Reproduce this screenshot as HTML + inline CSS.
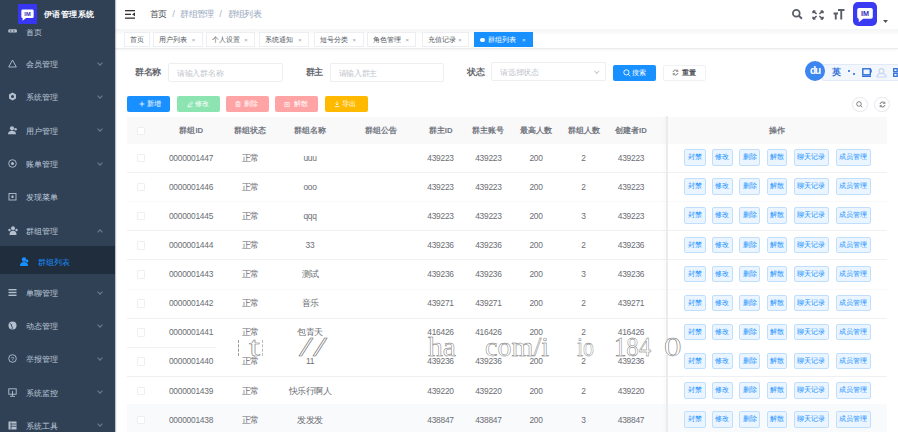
<!DOCTYPE html><html><head><meta charset="utf-8"><style>
*{margin:0;padding:0;box-sizing:border-box}
html,body{width:898px;height:432px;overflow:hidden;background:#fff;font-family:"Liberation Sans",sans-serif;}
.abs{position:absolute}
svg{position:absolute;overflow:visible}
.side{position:absolute;left:0;top:0;width:115px;height:432px;background:#304156;box-shadow:1px 0 1px rgba(0,21,41,.25);z-index:5;overflow:hidden}
.mi{position:absolute;left:0;width:115px;height:10px;color:#bfcbd9;font-size:8.2px;line-height:10px;white-space:nowrap}
.mi .t{position:absolute;left:26px;top:0.4px}
.mi svg{left:7.8px;top:-0.6px}
.mi .ch{position:absolute;left:98px;top:1.5px;width:4px;height:4px;border-right:0.7px solid #6f7d90;border-bottom:0.7px solid #6f7d90;transform:rotate(45deg)}
.logo{position:absolute;left:0;top:0;width:115px;height:28.75px;background:#304156;z-index:3}
.nav{position:absolute;left:115px;top:0;width:783px;height:29px;background:#fff}
.bc{position:absolute;top:9.4px;font-size:8.6px;letter-spacing:-0.6px;line-height:10px;color:#97a8be;white-space:nowrap}
.tags{position:absolute;left:115px;top:28.75px;width:783px;height:20px;background:#fff;border-bottom:1px solid #eaecf0;box-shadow:0 1px 2px rgba(0,0,0,.05)}
.tag{position:absolute;top:3px;height:15.5px;border:1px solid #eceef2;background:#fff;color:#51565e;font-size:7px;line-height:14.5px;white-space:nowrap;padding-left:5px}
.tag .x{position:absolute;top:0;font-size:6px;color:#a0a0a0}
.lbl{position:absolute;margin-top:-0.7px;font-size:8.6px;letter-spacing:-0.4px;font-weight:bold;color:#62656b;line-height:10px;white-space:nowrap}
.inp{position:absolute;height:19px;border:1px solid #eceef2;border-radius:2px;background:#fff;font-size:7.6px;letter-spacing:-0.3px;color:#c0c4cc;line-height:19px;padding-left:8px;white-space:nowrap}
.btn{position:absolute;height:16px;border-radius:2px;font-size:7px;line-height:16px;color:#fff;text-align:center;white-space:nowrap}
.th{position:absolute;font-size:7.8px;font-weight:bold;color:#72767f;line-height:10px;white-space:nowrap;transform:translateX(-50%)}
.td{position:absolute;font-size:8.4px;letter-spacing:-0.25px;color:#6c6e74;line-height:10px;white-space:nowrap;transform:translateX(-50%)}
.cb{position:absolute;left:137px;width:8px;height:8.5px;border:1px solid #edeff2;background:#fff;border-radius:1px}
.rb{position:absolute;left:127px;width:760px;height:1px;background:#eef0f4}
.ob{position:absolute;height:16.5px;border:1px solid #c0dffd;background:#eaf5ff;border-radius:2px;color:#1890ff;font-size:6.5px;line-height:14.5px;text-align:center;white-space:nowrap}
</style></head><body>
<div class="side">
<div class="mi" style="top:27.299999999999997px"><svg width="9" height="9" viewBox="0 0 9 9"><rect x="0.3" y="2.2" width="8.6" height="3.4" rx="1.2" fill="#b3bfce"/><rect x="2.2" y="3.3" width="1" height="1.3" fill="#304156"/><rect x="5.3" y="3.3" width="1" height="1.3" fill="#304156"/></svg><span class="t">首页</span></div>
<div class="mi" style="top:60px"><svg width="9" height="9" viewBox="0 0 9 9"><path d="M4.5 1 L8.3 8 H0.7 Z" fill="none" stroke="#b3bfce" stroke-width="0.9"/></svg><span class="t">会员管理</span><span class="ch" style="top:1px"></span></div>
<div class="mi" style="top:93px"><svg width="9" height="9" viewBox="0 0 9 9"><path d="M4.5 0.5 L8 2.5 V6.5 L4.5 8.5 L1 6.5 V2.5 Z" fill="#b3bfce"/><circle cx="4.5" cy="4.5" r="1.5" fill="#304156"/></svg><span class="t">系统管理</span><span class="ch" style="top:1px"></span></div>
<div class="mi" style="top:126.30000000000001px"><svg width="10" height="9" viewBox="0 0 10 9"><circle cx="4" cy="2.3" r="2.1" fill="#b3bfce"/><path d="M0 8.3 Q0 4.8 4 4.8 Q8 4.8 8 8.3 Z" fill="#b3bfce"/><circle cx="7.6" cy="3.2" r="1.2" fill="#b3bfce"/></svg><span class="t">用户管理</span><span class="ch" style="top:1px"></span></div>
<div class="mi" style="top:159.6px"><svg width="9" height="9" viewBox="0 0 9 9"><circle cx="4.5" cy="4.5" r="3.8" fill="none" stroke="#b3bfce" stroke-width="0.9"/><circle cx="4.5" cy="4.5" r="1.5" fill="#b3bfce"/></svg><span class="t">账单管理</span><span class="ch" style="top:1px"></span></div>
<div class="mi" style="top:193px"><svg width="9" height="9" viewBox="0 0 9 9"><rect x="1" y="1.5" width="7" height="6.5" fill="none" stroke="#b3bfce" stroke-width="0.9"/><rect x="3.5" y="3.5" width="2" height="2.5" fill="#b3bfce"/></svg><span class="t">发现菜单</span></div>
<div class="mi" style="top:226.3px"><svg width="10" height="9" viewBox="0 0 10 9"><circle cx="5" cy="2.3" r="2" fill="#b3bfce"/><path d="M1.5 9 Q1.5 4.8 5 4.8 Q8.5 4.8 8.5 9 Z" fill="#b3bfce"/><circle cx="1.5" cy="4" r="1.2" fill="#b3bfce"/><circle cx="8.5" cy="4" r="1.2" fill="#b3bfce"/></svg><span class="t">群组管理</span><span class="ch" style="top:3.5px;transform:rotate(-135deg)"></span></div>
<div class="abs" style="left:0;top:245.5px;width:115px;height:28.5px;background:#1f2d3d"></div>
<div class="mi" style="top:257.5px;color:#1890ff"><svg style="left:20px" width="9" height="9" viewBox="0 0 9 9"><circle cx="4" cy="2.5" r="2.2" fill="#1890ff"/><path d="M0 9 Q0 5 4 5 Q8 5 8 9 Z" fill="#1890ff"/><circle cx="7" cy="4" r="1.4" fill="#1890ff"/></svg><span class="t" style="left:38px">群组列表</span></div>
<div class="mi" style="top:288.8px"><svg width="9" height="9" viewBox="0 0 9 9"><rect x="0.5" y="1" width="8" height="1.4" fill="#b3bfce"/><rect x="0.5" y="3.8" width="8" height="1.4" fill="#b3bfce"/><rect x="0.5" y="6.6" width="8" height="1.4" fill="#b3bfce"/></svg><span class="t">单聊管理</span><span class="ch" style="top:1px"></span></div>
<div class="mi" style="top:321.9px"><svg width="9" height="9" viewBox="0 0 9 9"><circle cx="4.5" cy="4.5" r="4" fill="#b3bfce"/><path d="M2 2.5 Q4 3 3.5 5 Q5 6 4 8" fill="none" stroke="#304156" stroke-width="0.9"/></svg><span class="t">动态管理</span><span class="ch" style="top:1px"></span></div>
<div class="mi" style="top:355px"><svg width="9" height="9" viewBox="0 0 9 9"><circle cx="4.5" cy="4.5" r="3.8" fill="none" stroke="#b3bfce" stroke-width="0.9"/><text x="4.5" y="6.6" font-size="6" text-anchor="middle" fill="#b3bfce" font-family="Liberation Sans">?</text></svg><span class="t">举报管理</span><span class="ch" style="top:1px"></span></div>
<div class="mi" style="top:388.2px"><svg width="9" height="9" viewBox="0 0 9 9"><rect x="0.8" y="0.8" width="7.4" height="5.4" fill="none" stroke="#b3bfce" stroke-width="0.9"/><path d="M4.5 3 V8 M2 8.3 H7" stroke="#b3bfce" stroke-width="0.9"/></svg><span class="t">系统监控</span><span class="ch" style="top:1px"></span></div>
<div class="mi" style="top:421.3px"><svg width="9" height="9" viewBox="0 0 9 9"><rect x="0.5" y="0.5" width="8" height="8" fill="#b3bfce"/><path d="M3 1.5 V8.5 M3 3 H8.5 M3 5.3 H8.5" stroke="#304156" stroke-width="0.8"/></svg><span class="t">系统工具</span><span class="ch" style="top:1px"></span></div>
<div class="logo"><div class="abs" style="left:17.5px;top:3.5px;width:19px;height:20.5px;background:#3737f3;border-radius:1px"></div><svg style="left:17.5px;top:3.5px" width="19" height="20.5" viewBox="0 0 20 20"><path d="M5 5 H15 Q16.5 5 16.5 6.5 V12.5 Q16.5 14 15 14 H8.5 L4.8 16.8 V14 Q3.5 14 3.5 12.5 V6.5 Q3.5 5 5 5 Z" fill="#fff"/><text x="10" y="11.9" font-size="6" font-weight="bold" text-anchor="middle" fill="#3030b8" font-family="Liberation Sans">IM</text></svg><div class="abs" style="left:44px;top:9.7px;font-size:8.2px;letter-spacing:0.45px;font-weight:bold;color:#fff;line-height:10px;white-space:nowrap">伊语管理系统</div></div>
</div>
<div class="nav">
<svg style="left:9.8px;top:10px" width="10" height="9" viewBox="0 0 10 9"><rect x="0" y="0" width="10" height="1.3" fill="#333"/><rect x="0" y="3.7" width="6" height="1.3" fill="#333"/><path d="M10 2.5 L7 4.35 L10 6.2 Z" fill="#333"/><rect x="0" y="7.5" width="10" height="1.3" fill="#333"/></svg>
<div class="bc" style="left:34.7px;color:#4a4d52">首页</div><div class="bc" style="left:57.3px;font-size:9.5px;color:#a8b4c4">/</div><div class="bc" style="left:65.3px">群组管理</div><div class="bc" style="left:104.3px;font-size:9.5px;color:#a8b4c4">/</div><div class="bc" style="left:112.7px">群组列表</div>
<svg style="left:676.9px;top:9.4px" width="11" height="10" viewBox="0 0 11 10"><circle cx="4.3" cy="4.3" r="3.4" fill="none" stroke="#5a5e66" stroke-width="1.8"/><path d="M6.8 6.8 L10 9.8" stroke="#5a5e66" stroke-width="1.9"/></svg>
<svg style="left:697px;top:9.5px" width="12" height="10" viewBox="0 0 12 10"><path d="M1.2 1.2 L4.6 3.9 M1 1 H3.4 M1 1 V3.2 M10.8 1.2 L7.4 3.9 M11 1 H8.6 M11 1 V3.2 M1.2 8.8 L4.6 6.1 M1 9 H3.4 M1 9 V6.8 M10.8 8.8 L7.4 6.1 M11 9 H8.6 M11 9 V6.8" fill="none" stroke="#5a5e66" stroke-width="1.5"/></svg>
<svg style="left:717.8px;top:9px" width="12" height="11" viewBox="0 0 12 11"><path d="M0.5 4.5 H5 M2.75 4.5 V10.5 M5 1 H11.5 M8.25 1 V10.5" fill="none" stroke="#5a5e66" stroke-width="1.9"/></svg>
<div class="abs" style="left:738px;top:2px;width:24px;height:24px;border-radius:5px;background:#3a3af2"></div>
<svg style="left:738px;top:1.5px" width="24" height="24" viewBox="0 0 20 20"><path d="M5 5 H15 Q16.5 5 16.5 6.5 V12.5 Q16.5 14 15 14 H8.5 L4.8 16.8 V14 Q3.5 14 3.5 12.5 V6.5 Q3.5 5 5 5 Z" fill="#fff"/><text x="10" y="11.9" font-size="6" font-weight="bold" text-anchor="middle" fill="#3030b8" font-family="Liberation Sans">IM</text></svg>
<svg style="left:768px;top:19.5px" width="5" height="3" viewBox="0 0 5 3"><path d="M0 0 H5 L2.5 3 Z" fill="#555"/></svg>
</div>
<div class="tags">
<div class="abs" style="left:0;top:0;width:783px;height:5px;background:linear-gradient(#f4f5f6,#fcfcfc)"></div>
<div class="tag" style="left:9.200000000000003px;width:25.499999999999986px">首页</div>
<div class="tag" style="left:38px;width:49.69999999999999px">用户列表<span class="x" style="left:37.69999999999999px">×</span></div>
<div class="tag" style="left:91px;width:49.30000000000001px">个人设置<span class="x" style="left:37.30000000000001px">×</span></div>
<div class="tag" style="left:144.2px;width:50.10000000000002px">系统通知<span class="x" style="left:38.10000000000002px">×</span></div>
<div class="tag" style="left:198.5px;width:50.10000000000002px">短号分类<span class="x" style="left:38.10000000000002px">×</span></div>
<div class="tag" style="left:251.60000000000002px;width:49.799999999999955px">角色管理<span class="x" style="left:37.799999999999955px">×</span></div>
<div class="tag" style="left:306.7px;width:47.60000000000002px">充值记录<span class="x" style="left:35.60000000000002px">×</span></div>
<div class="tag" style="left:359px;width:59px;background:#1890ff;border-color:#1890ff;color:#fff;padding-left:13px"><span class="abs" style="left:5px;top:5px;width:4.5px;height:4.5px;border-radius:50%;background:#fff"></span>群组列表<span class="x" style="left:47px;color:#e8f2ff">×</span></div>
</div>
<div class="lbl" style="left:135px;top:67.5px">群名称</div>
<div class="inp" style="left:168px;top:62.5px;width:114.5px">请输入群名称</div>
<div class="lbl" style="left:305.7px;top:67.5px">群主</div>
<div class="inp" style="left:329.7px;top:62.5px;width:114.7px">请输入群主</div>
<div class="lbl" style="left:467px;top:67.5px">状态</div>
<div class="inp" style="left:491.2px;top:62px;width:115px">请选择状态</div>
<div class="abs" style="left:594.5px;top:68.5px;width:3.5px;height:3.5px;border-right:0.8px solid #c0c4cc;border-bottom:0.8px solid #c0c4cc;transform:rotate(45deg)"></div>
<div class="btn" style="left:612.7px;top:64.6px;width:43.3px;background:#1890ff;padding-left:9px">搜索</div><svg style="left:622.5px;top:68.6px" width="8" height="8" viewBox="0 0 8 8"><circle cx="3.4" cy="3.4" r="2.6" fill="none" stroke="#fff" stroke-width="0.9"/><path d="M5.3 5.3 L7.3 7.3" stroke="#fff" stroke-width="0.9"/></svg>
<div class="btn" style="left:662.9px;top:64.6px;width:42.7px;background:#fff;border:1px solid #f0f1f4;color:#50535a;line-height:14px;padding-left:9px;font-weight:bold">重置</div><svg style="left:672px;top:68.8px" width="7" height="7" viewBox="0 0 7 7"><path d="M1 3 A2.6 2.6 0 0 1 5.8 2.3 M6 4 A2.6 2.6 0 0 1 1.2 4.7" fill="none" stroke="#666" stroke-width="0.8"/><path d="M5.8 0.6 V2.6 H3.9 M1.2 6.4 V4.4 H3.1" fill="none" stroke="#666" stroke-width="0.6"/></svg>
<div class="btn" style="left:127.2px;top:96.2px;width:43px;height:16.3px;background:#1890ff"></div>
<svg style="left:139px;top:101.4px" width="6" height="6" viewBox="0 0 6 6"><path d="M3 0.5 V5.5 M0.5 3 H5.5" stroke="#fff" stroke-width="0.8" fill="none"/></svg>
<div class="abs" style="left:147.3px;top:99.4px;font-size:7px;line-height:10px;color:#fff;white-space:nowrap;letter-spacing:-0.2px">新增</div>
<div class="btn" style="left:176.7px;top:96.2px;width:43px;height:16.3px;background:#8ce4b1"></div>
<svg style="left:186.5px;top:101.4px" width="6" height="6" viewBox="0 0 6 6"><path d="M1 5.5 L1.3 4 L4.5 0.8 L5.6 1.9 L2.4 5.1 Z M0.5 5.8 H5.5" stroke="#fff" stroke-width="0.7" fill="none"/></svg>
<div class="abs" style="left:195px;top:99.4px;font-size:7px;line-height:10px;color:#fff;white-space:nowrap;letter-spacing:-0.2px">修改</div>
<div class="btn" style="left:225.7px;top:96.2px;width:43px;height:16.3px;background:#ffa4a4"></div>
<svg style="left:234.5px;top:101.4px" width="6" height="6" viewBox="0 0 6 6"><path d="M0.5 1.3 H5.5 M2 1.3 V0.5 H4 V1.3 M1.1 1.5 V5.6 H4.9 V1.5 M2.4 2.5 V4.6 M3.6 2.5 V4.6" stroke="#fff" stroke-width="0.7" fill="none"/></svg>
<div class="abs" style="left:244px;top:99.4px;font-size:7px;line-height:10px;color:#fff;white-space:nowrap;letter-spacing:-0.2px">删除</div>
<div class="btn" style="left:275px;top:96.2px;width:43px;height:16.3px;background:#ffa4a4"></div>
<svg style="left:284px;top:101.4px" width="6" height="6" viewBox="0 0 6 6"><path d="M0.8 1.5 H5.2 V5.6 H0.8 Z M3 1.5 V4.2 M2 3.3 L3 4.3 L4 3.3" stroke="#fff" stroke-width="0.7" fill="none"/></svg>
<div class="abs" style="left:294px;top:99.4px;font-size:7px;line-height:10px;color:#fff;white-space:nowrap;letter-spacing:-0.2px">解散</div>
<div class="btn" style="left:324.6px;top:96.2px;width:43px;height:16.3px;background:#ffba00"></div>
<svg style="left:333.8px;top:101.4px" width="6" height="6" viewBox="0 0 6 6"><path d="M3 0.5 V4 M1.6 2.6 L3 4 L4.4 2.6 M0.8 5.6 H5.2" stroke="#fff" stroke-width="0.8" fill="none"/></svg>
<div class="abs" style="left:342px;top:99.4px;font-size:7px;line-height:10px;color:#fff;white-space:nowrap;letter-spacing:-0.2px">导出</div>
<div class="abs" style="left:852px;top:96.7px;width:15.5px;height:15.5px;border:1px solid #e4e7ed;border-radius:50%"></div>
<div class="abs" style="left:874.4px;top:96.7px;width:15.5px;height:15.5px;border:1px solid #e4e7ed;border-radius:50%"></div>
<div class="abs" style="left:127px;top:117px;width:760px;height:26.5px;background:#f9f9fa"></div>
<div class="cb" style="top:126.7px"></div>
<div class="th" style="left:191.3px;top:125.5px">群组ID</div>
<div class="th" style="left:250.3px;top:125.5px">群组状态</div>
<div class="th" style="left:310px;top:125.5px">群组名称</div>
<div class="th" style="left:381.4px;top:125.5px">群组公告</div>
<div class="th" style="left:440.7px;top:125.5px">群主ID</div>
<div class="th" style="left:488.4px;top:125.5px">群主账号</div>
<div class="th" style="left:536px;top:125.5px">最高人数</div>
<div class="th" style="left:583.5px;top:125.5px">群组人数</div>
<div class="th" style="left:631px;top:125.5px">创建者ID</div>
<div class="th" style="left:777px;top:125.5px">操作</div>
<div class="cb" style="top:153.7px"></div>
<div class="td" style="left:191px;top:152.7px;">0000001447</div>
<div class="td" style="left:250.3px;top:152.7px;font-size:8.6px;letter-spacing:-0.6px;">正常</div>
<div class="td" style="left:310px;top:152.7px;">uuu</div>
<div class="td" style="left:440.5px;top:152.7px;">439223</div>
<div class="td" style="left:488.4px;top:152.7px;">439223</div>
<div class="td" style="left:536px;top:152.7px;">200</div>
<div class="td" style="left:583.5px;top:152.7px;">2</div>
<div class="td" style="left:631px;top:152.7px;">439223</div>
<div class="rb" style="top:172.1px"></div>
<div class="ob" style="left:684.4px;top:149.2px;width:21.200000000000045px">封禁</div>
<div class="ob" style="left:711.7px;top:149.2px;width:21.199999999999932px">修改</div>
<div class="ob" style="left:739px;top:149.2px;width:21.200000000000045px">删除</div>
<div class="ob" style="left:766.5px;top:149.2px;width:20.700000000000045px">解散</div>
<div class="ob" style="left:793.8px;top:149.2px;width:35.200000000000045px">聊天记录</div>
<div class="ob" style="left:835.5px;top:149.2px;width:35.200000000000045px">成员管理</div>
<div class="cb" style="top:182.79999999999998px"></div>
<div class="td" style="left:191px;top:181.79999999999998px;">0000001446</div>
<div class="td" style="left:250.3px;top:181.79999999999998px;font-size:8.6px;letter-spacing:-0.6px;">正常</div>
<div class="td" style="left:310px;top:181.79999999999998px;">ooo</div>
<div class="td" style="left:440.5px;top:181.79999999999998px;">439223</div>
<div class="td" style="left:488.4px;top:181.79999999999998px;">439223</div>
<div class="td" style="left:536px;top:181.79999999999998px;">200</div>
<div class="td" style="left:583.5px;top:181.79999999999998px;">2</div>
<div class="td" style="left:631px;top:181.79999999999998px;">439223</div>
<div class="rb" style="top:201.2px;background:#f8f9fb"></div>
<div class="ob" style="left:684.4px;top:178.29999999999998px;width:21.200000000000045px">封禁</div>
<div class="ob" style="left:711.7px;top:178.29999999999998px;width:21.199999999999932px">修改</div>
<div class="ob" style="left:739px;top:178.29999999999998px;width:21.200000000000045px">删除</div>
<div class="ob" style="left:766.5px;top:178.29999999999998px;width:20.700000000000045px">解散</div>
<div class="ob" style="left:793.8px;top:178.29999999999998px;width:35.200000000000045px">聊天记录</div>
<div class="ob" style="left:835.5px;top:178.29999999999998px;width:35.200000000000045px">成员管理</div>
<div class="cb" style="top:211.89999999999998px"></div>
<div class="td" style="left:191px;top:210.89999999999998px;">0000001445</div>
<div class="td" style="left:250.3px;top:210.89999999999998px;font-size:8.6px;letter-spacing:-0.6px;">正常</div>
<div class="td" style="left:310px;top:210.89999999999998px;">qqq</div>
<div class="td" style="left:440.5px;top:210.89999999999998px;">439223</div>
<div class="td" style="left:488.4px;top:210.89999999999998px;">439223</div>
<div class="td" style="left:536px;top:210.89999999999998px;">200</div>
<div class="td" style="left:583.5px;top:210.89999999999998px;">3</div>
<div class="td" style="left:631px;top:210.89999999999998px;">439223</div>
<div class="rb" style="top:230.29999999999998px"></div>
<div class="ob" style="left:684.4px;top:207.39999999999998px;width:21.200000000000045px">封禁</div>
<div class="ob" style="left:711.7px;top:207.39999999999998px;width:21.199999999999932px">修改</div>
<div class="ob" style="left:739px;top:207.39999999999998px;width:21.200000000000045px">删除</div>
<div class="ob" style="left:766.5px;top:207.39999999999998px;width:20.700000000000045px">解散</div>
<div class="ob" style="left:793.8px;top:207.39999999999998px;width:35.200000000000045px">聊天记录</div>
<div class="ob" style="left:835.5px;top:207.39999999999998px;width:35.200000000000045px">成员管理</div>
<div class="cb" style="top:241.0px"></div>
<div class="td" style="left:191px;top:240.0px;">0000001444</div>
<div class="td" style="left:250.3px;top:240.0px;font-size:8.6px;letter-spacing:-0.6px;">正常</div>
<div class="td" style="left:310px;top:240.0px;">33</div>
<div class="td" style="left:440.5px;top:240.0px;">439236</div>
<div class="td" style="left:488.4px;top:240.0px;">439236</div>
<div class="td" style="left:536px;top:240.0px;">200</div>
<div class="td" style="left:583.5px;top:240.0px;">2</div>
<div class="td" style="left:631px;top:240.0px;">439236</div>
<div class="rb" style="top:259.40000000000003px"></div>
<div class="ob" style="left:684.4px;top:236.5px;width:21.200000000000045px">封禁</div>
<div class="ob" style="left:711.7px;top:236.5px;width:21.199999999999932px">修改</div>
<div class="ob" style="left:739px;top:236.5px;width:21.200000000000045px">删除</div>
<div class="ob" style="left:766.5px;top:236.5px;width:20.700000000000045px">解散</div>
<div class="ob" style="left:793.8px;top:236.5px;width:35.200000000000045px">聊天记录</div>
<div class="ob" style="left:835.5px;top:236.5px;width:35.200000000000045px">成员管理</div>
<div class="cb" style="top:270.09999999999997px"></div>
<div class="td" style="left:191px;top:269.09999999999997px;">0000001443</div>
<div class="td" style="left:250.3px;top:269.09999999999997px;font-size:8.6px;letter-spacing:-0.6px;">正常</div>
<div class="td" style="left:310px;top:269.09999999999997px;font-size:8.6px;letter-spacing:-0.6px;">测试</div>
<div class="td" style="left:440.5px;top:269.09999999999997px;">439236</div>
<div class="td" style="left:488.4px;top:269.09999999999997px;">439236</div>
<div class="td" style="left:536px;top:269.09999999999997px;">200</div>
<div class="td" style="left:583.5px;top:269.09999999999997px;">3</div>
<div class="td" style="left:631px;top:269.09999999999997px;">439236</div>
<div class="rb" style="top:288.5px;background:#f8f9fb"></div>
<div class="ob" style="left:684.4px;top:265.59999999999997px;width:21.200000000000045px">封禁</div>
<div class="ob" style="left:711.7px;top:265.59999999999997px;width:21.199999999999932px">修改</div>
<div class="ob" style="left:739px;top:265.59999999999997px;width:21.200000000000045px">删除</div>
<div class="ob" style="left:766.5px;top:265.59999999999997px;width:20.700000000000045px">解散</div>
<div class="ob" style="left:793.8px;top:265.59999999999997px;width:35.200000000000045px">聊天记录</div>
<div class="ob" style="left:835.5px;top:265.59999999999997px;width:35.200000000000045px">成员管理</div>
<div class="cb" style="top:299.2px"></div>
<div class="td" style="left:191px;top:298.2px;">0000001442</div>
<div class="td" style="left:250.3px;top:298.2px;font-size:8.6px;letter-spacing:-0.6px;">正常</div>
<div class="td" style="left:310px;top:298.2px;font-size:8.6px;letter-spacing:-0.6px;">音乐</div>
<div class="td" style="left:440.5px;top:298.2px;">439271</div>
<div class="td" style="left:488.4px;top:298.2px;">439271</div>
<div class="td" style="left:536px;top:298.2px;">200</div>
<div class="td" style="left:583.5px;top:298.2px;">2</div>
<div class="td" style="left:631px;top:298.2px;">439271</div>
<div class="rb" style="top:317.6px"></div>
<div class="ob" style="left:684.4px;top:294.7px;width:21.200000000000045px">封禁</div>
<div class="ob" style="left:711.7px;top:294.7px;width:21.199999999999932px">修改</div>
<div class="ob" style="left:739px;top:294.7px;width:21.200000000000045px">删除</div>
<div class="ob" style="left:766.5px;top:294.7px;width:20.700000000000045px">解散</div>
<div class="ob" style="left:793.8px;top:294.7px;width:35.200000000000045px">聊天记录</div>
<div class="ob" style="left:835.5px;top:294.7px;width:35.200000000000045px">成员管理</div>
<div class="cb" style="top:328.3px"></div>
<div class="td" style="left:191px;top:327.3px;">0000001441</div>
<div class="td" style="left:250.3px;top:327.3px;font-size:8.6px;letter-spacing:-0.6px;">正常</div>
<div class="td" style="left:310px;top:327.3px;font-size:8.6px;letter-spacing:-0.6px;">包青天</div>
<div class="td" style="left:440.5px;top:327.3px;">416426</div>
<div class="td" style="left:488.4px;top:327.3px;">416426</div>
<div class="td" style="left:536px;top:327.3px;">200</div>
<div class="td" style="left:583.5px;top:327.3px;">2</div>
<div class="td" style="left:631px;top:327.3px;">416426</div>
<div class="rb" style="top:346.70000000000005px"></div>
<div class="ob" style="left:684.4px;top:323.8px;width:21.200000000000045px">封禁</div>
<div class="ob" style="left:711.7px;top:323.8px;width:21.199999999999932px">修改</div>
<div class="ob" style="left:739px;top:323.8px;width:21.200000000000045px">删除</div>
<div class="ob" style="left:766.5px;top:323.8px;width:20.700000000000045px">解散</div>
<div class="ob" style="left:793.8px;top:323.8px;width:35.200000000000045px">聊天记录</div>
<div class="ob" style="left:835.5px;top:323.8px;width:35.200000000000045px">成员管理</div>
<div class="cb" style="top:357.40000000000003px"></div>
<div class="td" style="left:191px;top:356.40000000000003px;">0000001440</div>
<div class="td" style="left:250.3px;top:356.40000000000003px;font-size:8.6px;letter-spacing:-0.6px;">正常</div>
<div class="td" style="left:310px;top:356.40000000000003px;">11</div>
<div class="td" style="left:440.5px;top:356.40000000000003px;">439236</div>
<div class="td" style="left:488.4px;top:356.40000000000003px;">439236</div>
<div class="td" style="left:536px;top:356.40000000000003px;">200</div>
<div class="td" style="left:583.5px;top:356.40000000000003px;">2</div>
<div class="td" style="left:631px;top:356.40000000000003px;">439236</div>
<div class="rb" style="top:375.80000000000007px"></div>
<div class="ob" style="left:684.4px;top:352.90000000000003px;width:21.200000000000045px">封禁</div>
<div class="ob" style="left:711.7px;top:352.90000000000003px;width:21.199999999999932px">修改</div>
<div class="ob" style="left:739px;top:352.90000000000003px;width:21.200000000000045px">删除</div>
<div class="ob" style="left:766.5px;top:352.90000000000003px;width:20.700000000000045px">解散</div>
<div class="ob" style="left:793.8px;top:352.90000000000003px;width:35.200000000000045px">聊天记录</div>
<div class="ob" style="left:835.5px;top:352.90000000000003px;width:35.200000000000045px">成员管理</div>
<div class="cb" style="top:386.5px"></div>
<div class="td" style="left:191px;top:385.5px;">0000001439</div>
<div class="td" style="left:250.3px;top:385.5px;font-size:8.6px;letter-spacing:-0.6px;">正常</div>
<div class="td" style="left:310px;top:385.5px;font-size:8.6px;letter-spacing:-0.6px;">快乐行啊人</div>
<div class="td" style="left:440.5px;top:385.5px;">439220</div>
<div class="td" style="left:488.4px;top:385.5px;">439220</div>
<div class="td" style="left:536px;top:385.5px;">200</div>
<div class="td" style="left:583.5px;top:385.5px;">2</div>
<div class="td" style="left:631px;top:385.5px;">439220</div>
<div class="ob" style="left:684.4px;top:382.0px;width:21.200000000000045px">封禁</div>
<div class="ob" style="left:711.7px;top:382.0px;width:21.199999999999932px">修改</div>
<div class="ob" style="left:739px;top:382.0px;width:21.200000000000045px">删除</div>
<div class="ob" style="left:766.5px;top:382.0px;width:20.700000000000045px">解散</div>
<div class="ob" style="left:793.8px;top:382.0px;width:35.200000000000045px">聊天记录</div>
<div class="ob" style="left:835.5px;top:382.0px;width:35.200000000000045px">成员管理</div>
<div class="abs" style="left:127px;top:404.20000000000005px;width:760px;height:30px;background:#f9fafc"></div>
<div class="cb" style="top:415.6px"></div>
<div class="td" style="left:191px;top:414.6px;">0000001438</div>
<div class="td" style="left:250.3px;top:414.6px;font-size:8.6px;letter-spacing:-0.6px;">正常</div>
<div class="td" style="left:310px;top:414.6px;font-size:8.6px;letter-spacing:-0.6px;">发发发</div>
<div class="td" style="left:440.5px;top:414.6px;">438847</div>
<div class="td" style="left:488.4px;top:414.6px;">438847</div>
<div class="td" style="left:536px;top:414.6px;">200</div>
<div class="td" style="left:583.5px;top:414.6px;">3</div>
<div class="td" style="left:631px;top:414.6px;">438847</div>
<div class="rb" style="top:434.00000000000006px"></div>
<div class="ob" style="left:684.4px;top:411.1px;width:21.200000000000045px">封禁</div>
<div class="ob" style="left:711.7px;top:411.1px;width:21.199999999999932px">修改</div>
<div class="ob" style="left:739px;top:411.1px;width:21.200000000000045px">删除</div>
<div class="ob" style="left:766.5px;top:411.1px;width:20.700000000000045px">解散</div>
<div class="ob" style="left:793.8px;top:411.1px;width:35.200000000000045px">聊天记录</div>
<div class="ob" style="left:835.5px;top:411.1px;width:35.200000000000045px">成员管理</div>
<div class="abs" style="left:662px;top:116px;width:4.5px;height:316px;background:linear-gradient(90deg,rgba(0,0,0,0),rgba(0,0,0,.025))"></div><div class="abs" style="left:666px;top:116px;width:1.5px;height:316px;background:#ebebeb"></div>
<div class="abs" style="left:822px;top:63.6px;width:80px;height:17.8px;background:#f2f6fd;border:1px solid #e2eaf7;border-right:none;border-radius:2px"></div>
<div class="abs" style="left:804.7px;top:61px;width:20.3px;height:20px;border-radius:50%;background:#3d86f2"></div>
<div class="abs" style="left:806px;top:64.5px;width:18px;font-size:10px;line-height:12px;font-weight:bold;color:#fff;text-align:center;letter-spacing:-1px">du</div>
<div class="abs" style="left:831.5px;top:66.5px;font-size:9px;line-height:11px;font-weight:bold;color:#2f6fd6">英</div>
<div class="abs" style="left:848px;top:70px;width:1.6px;height:1.6px;background:#2f6fd6;border-radius:50%"></div><div class="abs" style="left:852.5px;top:72.5px;width:2px;height:2.5px;background:#2f6fd6;border-radius:50%"></div>
<svg style="left:862px;top:67.6px" width="10" height="9" viewBox="0 0 10 9"><rect x="0.8" y="0.8" width="7.5" height="6" fill="none" stroke="#2f6fd6" stroke-width="1.4"/><rect x="0" y="7.6" width="9" height="1.4" fill="#2f6fd6"/><rect x="8.3" y="1.5" width="1.5" height="3" fill="#2f6fd6"/></svg>
<svg style="left:876px;top:67.5px" width="11" height="9.5" viewBox="0 0 11 9.5"><circle cx="5.5" cy="3" r="2.4" fill="none" stroke="#c8d5ef" stroke-width="1.1"/><path d="M1 9 Q1 5.5 5.5 5.5 Q10 5.5 10 9 Z" fill="none" stroke="#c8d5ef" stroke-width="1.1"/></svg>
<svg style="left:892.5px;top:67.5px" width="6" height="9" viewBox="0 0 6 9"><rect x="0.7" y="0.7" width="3.5" height="3" fill="none" stroke="#2f6fd6" stroke-width="1.3"/><rect x="0.7" y="5.3" width="3.5" height="3" fill="none" stroke="#2f6fd6" stroke-width="1.3"/></svg>
<svg style="left:856.2px;top:101.3px" width="7" height="7" viewBox="0 0 7 7"><circle cx="3" cy="3" r="2.3" fill="none" stroke="#555" stroke-width="0.7"/><path d="M4.7 4.7 L6.3 6.3" stroke="#555" stroke-width="0.7"/></svg>
<svg style="left:879px;top:101px" width="7" height="7" viewBox="0 0 7 7"><path d="M1 3 A2.6 2.6 0 0 1 5.8 2.3 M6 4 A2.6 2.6 0 0 1 1.2 4.7" fill="none" stroke="#555" stroke-width="0.8"/><path d="M5.8 0.6 V2.6 H3.9 M1.2 6.4 V4.4 H3.1" fill="none" stroke="#555" stroke-width="0.6"/></svg>
<div class="abs" style="left:238px;top:340px;width:0;height:16px;border-left:0.6px dashed #999;z-index:9"></div><div class="abs" style="left:262px;top:340px;width:0;height:16px;border-left:0.6px dashed #bbb;z-index:9"></div>
<div class="abs" style="left:216px;top:339.5px;width:466px;height:15px;background:#fff;z-index:7"></div><div class="abs" style="left:680px;top:345.5px;width:210px;height:2.5px;background:#fff;z-index:7"></div>
<svg style="left:249px;top:332px;z-index:8" width="11" height="30" viewBox="0 0 11 30"><text x="0" y="23.8" font-family="Liberation Serif" font-size="27" textLength="11" lengthAdjust="spacingAndGlyphs" fill="#fff" stroke="#707070" stroke-width="0.45">t</text></svg>
<svg style="left:299px;top:332px;z-index:8" width="28" height="30" viewBox="0 0 28 30"><text x="0" y="23.8" font-family="Liberation Serif" font-size="27" textLength="28" lengthAdjust="spacingAndGlyphs" fill="#fff" stroke="#707070" stroke-width="0.45">//</text></svg>
<svg style="left:427.5px;top:332px;z-index:8" width="28.0" height="30" viewBox="0 0 28.0 30"><text x="0" y="23.8" font-family="Liberation Serif" font-size="27" textLength="28.0" lengthAdjust="spacingAndGlyphs" fill="#fff" stroke="#707070" stroke-width="0.45">ha</text></svg>
<svg style="left:485px;top:332px;z-index:8" width="64" height="30" viewBox="0 0 64 30"><text x="0" y="23.8" font-family="Liberation Serif" font-size="27" textLength="64" lengthAdjust="spacingAndGlyphs" fill="#fff" stroke="#707070" stroke-width="0.45">com/i</text></svg>
<svg style="left:577px;top:332px;z-index:8" width="17" height="30" viewBox="0 0 17 30"><text x="0" y="23.8" font-family="Liberation Serif" font-size="27" textLength="17" lengthAdjust="spacingAndGlyphs" fill="#fff" stroke="#707070" stroke-width="0.45">io</text></svg>
<svg style="left:614px;top:332px;z-index:8" width="37" height="30" viewBox="0 0 37 30"><text x="0" y="23.8" font-family="Liberation Serif" font-size="27" textLength="37" lengthAdjust="spacingAndGlyphs" fill="#fff" stroke="#707070" stroke-width="0.45">184</text></svg>
<svg style="left:663.5px;top:332px;z-index:8" width="17.5" height="30" viewBox="0 0 17.5 30"><text x="0" y="23.8" font-family="Liberation Serif" font-size="27" textLength="17.5" lengthAdjust="spacingAndGlyphs" fill="#fff" stroke="#707070" stroke-width="0.45">0</text></svg>
</body></html>
